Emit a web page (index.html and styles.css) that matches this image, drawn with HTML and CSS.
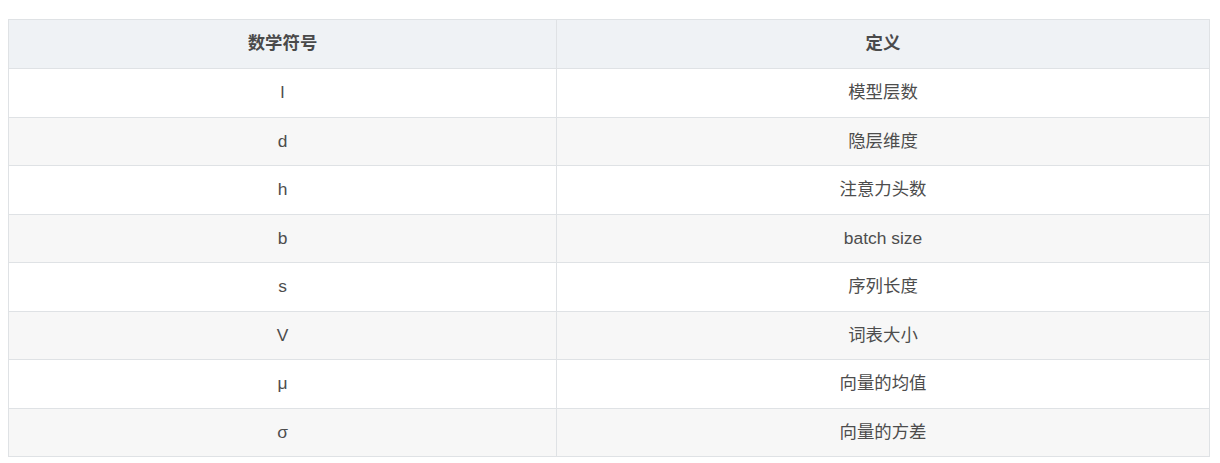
FILE: index.html
```html
<!DOCTYPE html>
<html lang="zh">
<head>
<meta charset="utf-8">
<link rel="stylesheet" href="styles.css">
</head>
<body>
<div class="page">
  <table class="sym-table">
    <colgroup><col class="c1"><col class="c2"></colgroup>
    <thead>
      <tr><th>数学符号</th><th>定义</th></tr>
    </thead>
    <tbody>
      <tr><td>l</td><td>模型层数</td></tr>
      <tr><td>d</td><td>隐层维度</td></tr>
      <tr><td>h</td><td>注意力头数</td></tr>
      <tr><td>b</td><td>batch size</td></tr>
      <tr><td>s</td><td>序列长度</td></tr>
      <tr><td>V</td><td>词表大小</td></tr>
      <tr><td>μ</td><td>向量的均值</td></tr>
      <tr><td>σ</td><td>向量的方差</td></tr>
    </tbody>
  </table>
</div>
</body>
</html>
```
FILE: styles.css
```css
html, body {
  margin: 0;
  padding: 0;
  background: #ffffff;
}
.page {
  padding: 19px 10px 0 8px;
  font-family: "Liberation Sans", "Noto Sans CJK SC", sans-serif;
  font-size: 17.4px;
  color: #4d4d4d;
}
.sym-table {
  width: 1202px;
  border-collapse: collapse;
  table-layout: fixed;
}
.sym-table .c1 { width: 548px; }
.sym-table th,
.sym-table td {
  border: 1px solid #dfe2e5;
  text-align: center;
  padding: 12px 13px;
  line-height: 23.5px;
}
.sym-table th {
  background: #eff2f5;
  font-weight: bold;
  color: #4a4a4a;
  height: 24px;
}
.sym-table tbody tr:nth-child(even) td {
  background: #f7f7f7;
}
```
